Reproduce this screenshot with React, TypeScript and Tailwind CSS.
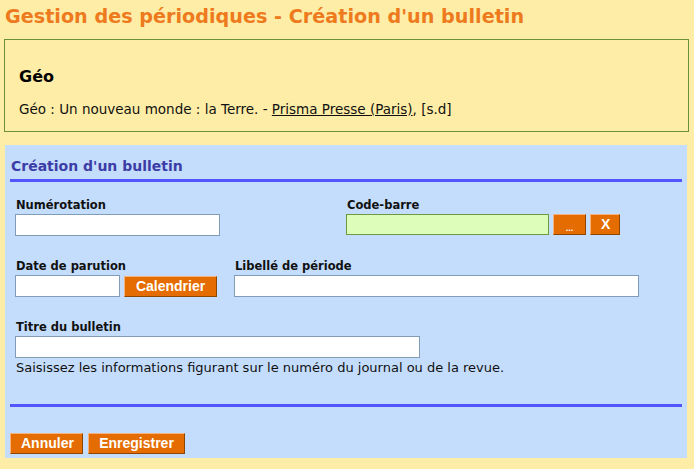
import React from "react";

const btn =
  "bg-[#E46C00] text-white font-bold text-[14px] leading-[17px] h-[21px] px-[10px] border border-t-[#F5B27C] border-l-[#F5B27C] border-r-[#8E4500] border-b-[#8E4500] [font-family:'Liberation_Sans',Arial,sans-serif]";

const input = "h-[22px] bg-white border border-[#7F9DB9] block";

const label = "block text-[11.5px] leading-[16px] font-bold text-[#111]";

export default function App() {
  return (
    <div className="min-h-[469px] w-[694px] bg-[#FEEDA6] pt-[5px] [font-family:'DejaVu_Sans',Verdana,sans-serif] text-black overflow-hidden">
      <h1 className="pl-[5px] text-[19.2px] leading-[24px] font-bold text-[#EE7A1E]">
        Gestion des périodiques - Création d'un bulletin
      </h1>
      <div className="mt-[10px] ml-[4px] mr-[5px] border border-[#6B8E3A] pl-[14px] pt-[27px] pb-[14px]">
        <h3 className="text-[16px] leading-[20px] font-bold">Géo</h3>
        <p className="mt-[14px] text-[13.5px] leading-[16px] text-[#111]">
          Géo : Un nouveau monde : la Terre. -{" "}
          <span className="underline">Prisma Presse (Paris)</span>, [s.d]
        </p>
      </div>
      <div className="mt-[13px] ml-[5px] mr-[7px] bg-[#C4DDFD] pt-[11px] pl-[5px] pr-[5px] pb-[4px]">
        <h2 className="pl-[1px] text-[14px] leading-[20px] font-bold text-[#3C3CA6] pb-[3px] border-b-[3px] border-[#5555FF]">
          Création d'un bulletin
        </h2>
        <div className="pl-[5px]">
          <div className="mt-[15px] flex">
            <div className="w-[331px]">
              <label className={label + " pl-[1px] mb-px"}>Numérotation</label>
              <input className={input + " w-[205px]"} />
            </div>
            <div>
              <label className={label + " pl-[1px] mb-px"}>Code-barre</label>
              <div className="flex items-center gap-[4px]">
                <input className="h-[21px] w-[203px] bg-[#DDFEBA] border border-[#6E9A3F] block" />
                <button className={btn + " w-[33px] px-0"}>
                  <span className="text-[9px] relative top-[3px]">...</span>
                </button>
                <button className={btn + " w-[30px] px-0"}>X</button>
              </div>
            </div>
          </div>
          <div className="mt-[22px] flex items-end">
            <div>
              <label className={label + " pl-[1px] mb-px"}>Date de parution</label>
              <div className="flex items-center gap-[4px]">
                <input className={input + " w-[105px]"} />
                <button className={btn + " w-[93px] px-0"}>Calendrier</button>
              </div>
            </div>
            <div className="ml-[17px]">
              <label className={label + " pl-[1px] mb-px"}>Libellé de période</label>
              <input className={input + " w-[405px]"} />
            </div>
          </div>
          <div className="mt-[22px]">
            <label className={label + " pl-[1px] mb-px"}>Titre du bulletin</label>
            <input className={input + " w-[405px]"} />
            <p className="mt-[2px] pl-[1px] text-[13px] leading-[16px] text-[#111]">
              Saisissez les informations figurant sur le numéro du journal ou de la revue.
            </p>
          </div>
        </div>
        <div className="mt-[28px] h-[3px] bg-[#5555FF]" />
        <div className="mt-[26px] flex gap-[5px]">
          <button className={btn + " w-[73px] px-0"}>Annuler</button>
          <button className={btn + " w-[97px] px-0"}>Enregistrer</button>
        </div>
      </div>
    </div>
  );
}
